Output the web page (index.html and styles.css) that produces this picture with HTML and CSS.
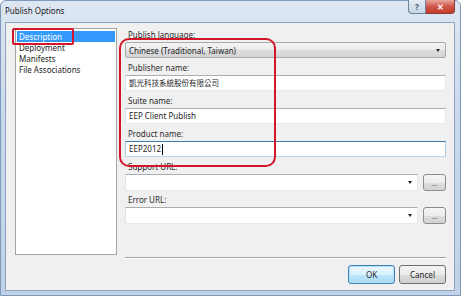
FILE: index.html
```html
<!DOCTYPE html>
<html lang="en">
<head>
  <meta charset="UTF-8">
  <title>Publish Options</title>
  <link rel="stylesheet" href="styles.css">
</head>
<body>

<div class="window">
  <div class="titlebar">
    <span class="title">Publish Options</span>
    <div class="caption-btns">
      <span class="cap-help">?</span>
      <span class="cap-close">&#x2715;</span>
    </div>
  </div>

  <div class="client">
    <div class="main">
      <ul class="nav">
        <li class="selected">Description</li>
        <li>Deployment</li>
        <li>Manifests</li>
        <li>File Associations</li>
      </ul>

      <div class="form">
        <div class="field-label">Publish language:</div>
        <div class="field combo-list">
          <span>Chinese (Traditional, Taiwan)</span>
          <span class="arrow"></span>
        </div>

        <div class="field-label">Publisher name:</div>
        <div class="field textbox cjk">凱光科技系統股份有限公司</div>

        <div class="field-label">Suite name:</div>
        <div class="field textbox">EEP Client Publish</div>

        <div class="field-label">Product name:</div>
        <div class="field textbox focused">EEP2012<span class="caret"></span></div>

        <div class="field-label">Support URL:</div>
        <div class="field url-row">
          <div class="combo-edit"><span class="arrow"></span></div>
          <button class="btn-browse">...</button>
        </div>

        <div class="field-label">Error URL:</div>
        <div class="field url-row">
          <div class="combo-edit"><span class="arrow"></span></div>
          <button class="btn-browse">...</button>
        </div>
      </div>
    </div>

    <div class="footer">
      <div class="sep"></div>
      <div class="actions">
        <button class="btn btn-default">OK</button>
        <button class="btn">Cancel</button>
      </div>
    </div>
  </div>

  <!-- annotations -->
  <div class="mark mark-nav"></div>
  <div class="mark mark-form"></div>
</div>

</body>
</html>
```

FILE: styles.css
```css
* {
  margin: 0;
  padding: 0;
  box-sizing: border-box;
}

body {
  width: 461px;
  height: 296px;
  overflow: hidden;
  font-family: 'Noto Sans', 'Noto Sans CJK TC', sans-serif;
  font-size: 8px;
  color: #1e1e1e;
  background: #fff;
}

.window {
  position: relative;
  width: 461px;
  height: 296px;
  display: flex;
  flex-direction: column;
  background: linear-gradient(#dde7f3, #c9d9eb 40%, #bfd2e8);
  border: 1px solid #7d98b8;
  border-radius: 6px 6px 0 0;
}

/* barre de titre */
.titlebar {
  height: 21px;
  display: flex;
  justify-content: space-between;
  align-items: flex-start;
}

.title {
  padding-left: 4px;
  line-height: 19px;
  font-size: 8px;
  color: #1a1a1a;
}

.caption-btns {
  display: flex;
  margin-right: 5px;
  margin-top: -1px;
}

.caption-btns span {
  height: 14px;
  display: flex;
  align-items: center;
  justify-content: center;
  color: #fff;
  border: 1px solid #6f829b;
  border-top: none;
}

.cap-help {
  width: 18px;
  background: linear-gradient(#e3ebf4, #c8d6e6);
  border-radius: 0 0 0 4px;
  color: #465a72 !important;
  font-weight: bold;
  font-size: 8px;
}

.cap-close {
  width: 29px;
  background: linear-gradient(#e9a79d, #d0564a 50%, #c43c2c);
  border-left: none !important;
  border-radius: 0 0 4px 0;
  font-size: 8px;
  font-weight: bold;
  border-color: #8c3a32 !important;
}

/* zone cliente */
.client {
  flex: 1;
  margin: 0 5px 4px 4px;
  background: #f0f0f0;
  border: 1px solid #8ea3bd;
  display: flex;
  flex-direction: column;
  padding: 5px 8px 0 9px;
}

.main {
  display: flex;
  gap: 8px;
  height: 227px;
}

.nav {
  width: 102px;
  background: #fff;
  border: 1px solid #a5a5a5;
  padding: 2px 1px;
  list-style: none;
}

.nav li {
  height: 11px;
  line-height: 11px;
  padding-left: 2px;
}

.nav li.selected {
  background: #3399ff;
  color: #fff;
}

.form {
  flex: 1;
  display: flex;
  flex-direction: column;
  padding-top: 1px;
}

.field-label {
  height: 12px;
  line-height: 12px;
  margin-bottom: 1px;
  padding-left: 3px;
  color: #2a2a2a;
}

.field {
  height: 16px;
  margin-bottom: 4px;
}

.combo-list {
  display: flex;
  align-items: center;
  justify-content: space-between;
  padding: 0 5px 0 3px;
  border: 1px solid #a9a9a9;
  border-radius: 2px;
  background: linear-gradient(#f3f3f3 0%, #ebebeb 50%, #dddddd 51%, #d4d4d4 100%);
}

.arrow {
  width: 0;
  height: 0;
  border-left: 2.5px solid transparent;
  border-right: 2.5px solid transparent;
  border-top: 3px solid #222;
}

.textbox {
  background: #fff;
  border: 1px solid;
  border-color: #abadb3 #e3e9ef #e3e9ef #e2e3ea;
  padding-left: 3px;
  line-height: 14px;
  display: flex;
  align-items: center;
}

.textbox.cjk {
  font-size: 7.5px;
}

.textbox.focused {
  border-color: #3d7bad #a4c9e3 #b7d9ed #b5cfe7;
}

.caret {
  display: inline-block;
  width: 1px;
  height: 11px;
  background: #000;
  margin-left: 1px;
}

.url-row {
  display: flex;
  gap: 5px;
  height: 17px;
  margin-bottom: 3px;
}

.combo-edit {
  flex: 1;
  background: #fff;
  border: 1px solid;
  border-color: #abadb3 #e3e9ef #e3e9ef #e2e3ea;
  display: flex;
  align-items: center;
  justify-content: flex-end;
  padding-right: 5px;
}

.btn-browse {
  width: 23px;
  font-family: inherit;
  font-size: 8px;
  color: #555;
  border: 1px solid #8c8c8c;
  border-radius: 3px;
  background: linear-gradient(#f6f6f6 0%, #ececec 50%, #dedede 51%, #d2d2d2 100%);
}

/* bas de la fenetre */
.footer {
  display: flex;
  flex-direction: column;
}

.sep {
  margin: 2px 0 0 110px;
  height: 2px;
  border-top: 1px solid #a0a0a0;
  border-bottom: 1px solid #fff;
}

.actions {
  display: flex;
  justify-content: flex-end;
  gap: 4px;
  margin-top: 6px;
}

.btn {
  width: 47px;
  height: 19px;
  font-family: inherit;
  font-size: 8px;
  color: #1e1e1e;
  border: 1px solid #707070;
  border-radius: 3px;
  background: linear-gradient(#f2f2f2 0%, #ebebeb 50%, #dddddd 51%, #cfcfcf 100%);
}

.btn-default {
  border-color: #3c7fb1;
  box-shadow: inset 0 0 0 1px #b6e1f7;
  background: linear-gradient(#eaf6fd 0%, #d9f0fc 50%, #bee6fd 51%, #a7d9f5 100%);
}

/* cadres rouges */
.mark {
  position: absolute;
  border: 2px solid #d3172a;
}

.mark-nav {
  left: 11px;
  top: 27px;
  width: 62px;
  height: 17px;
  border-radius: 2px;
}

.mark-form {
  left: 118px;
  top: 37px;
  width: 157px;
  height: 129px;
  border-radius: 10px;
}
```
